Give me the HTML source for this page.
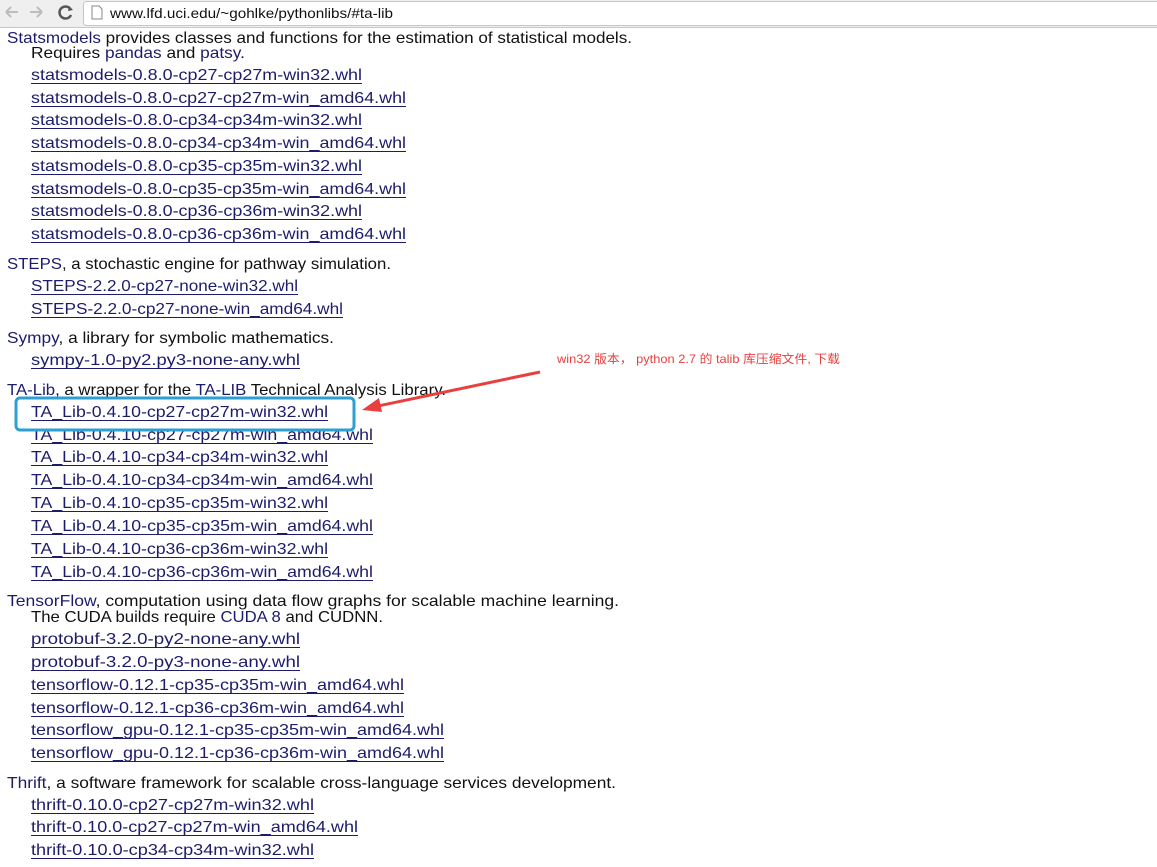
<!DOCTYPE html>
<html><head><meta charset="utf-8"><style>
html,body{margin:0;padding:0;background:#fff;width:1157px;height:867px;overflow:hidden}
svg{display:block}
text{font-family:"Liberation Sans",sans-serif;font-size:16px;fill:#111}
.l{fill:#1c1c6b}
.n{fill:#1c1c6b}
</style></head><body>
<svg width="1157" height="867" xmlns="http://www.w3.org/2000/svg">
<rect x="0" y="0" width="1157" height="28" fill="#efefef"/>
<line x1="0" y1="27.5" x2="1157" y2="27.5" stroke="#c8c8c8"/>
<rect x="83.5" y="1.5" width="1080" height="24" rx="3" fill="#fff" stroke="#c6c6c6"/>
<path d="M6 12h12M6 12l5-5M6 12l5 5" stroke="#bdbdbd" stroke-width="2" fill="none"/>
<path d="M42 12H30M42 12l-5-5M42 12l-5 5" stroke="#bdbdbd" stroke-width="2" fill="none"/>
<path d="M71 10a6 6 0 1 0 0 5" stroke="#555" stroke-width="2.5" fill="none"/>
<path d="M69 6l4 4-5 1z" fill="#555"/>
<path d="M92 6h7l3 3v10h-10z" fill="#fff" stroke="#888"/>
<text x="110" y="18" style="font-size:14px" textLength="283" lengthAdjust="spacingAndGlyphs" fill="#222">www.lfd.uci.edu/~gohlke/pythonlibs/#ta-lib</text>

<g id="body">
<text x="7" y="43" textLength="625" lengthAdjust="spacingAndGlyphs"><tspan class="n">Statsmodels</tspan> provides classes and functions for the estimation of statistical models.</text>
<text x="31" y="58" textLength="214" lengthAdjust="spacingAndGlyphs">Requires <tspan class="n">pandas</tspan> and <tspan class="n">patsy</tspan>.</text>
<text x="7" y="269" textLength="384" lengthAdjust="spacingAndGlyphs"><tspan class="n">STEPS</tspan>, a stochastic engine for pathway simulation.</text>
<text x="7" y="343" textLength="327" lengthAdjust="spacingAndGlyphs"><tspan class="n">Sympy</tspan>, a library for symbolic mathematics.</text>
<text x="7" y="395" textLength="439" lengthAdjust="spacingAndGlyphs"><tspan class="n">TA-Lib</tspan>, a wrapper for the <tspan class="n">TA-LIB</tspan> Technical Analysis Library.</text>
<text x="7" y="606" textLength="612" lengthAdjust="spacingAndGlyphs"><tspan class="n">TensorFlow</tspan>, computation using data flow graphs for scalable machine learning.</text>
<text x="31" y="622" textLength="352" lengthAdjust="spacingAndGlyphs">The CUDA builds require <tspan class="n">CUDA 8</tspan> and CUDNN.</text>
<text x="7" y="788" textLength="609" lengthAdjust="spacingAndGlyphs"><tspan class="n">Thrift</tspan>, a software framework for scalable cross-language services development.</text>
</g>
<g id="links"></g>

<rect x="16" y="398" width="338" height="32" rx="4" fill="none" stroke="#2c9fd4" stroke-width="3"/>
<line x1="540" y1="372" x2="378" y2="406" stroke="#e8403f" stroke-width="3"/>
<path d="M362 410l17-12 3 14z" fill="#e8403f"/>
<text x="557" y="363" textLength="283" lengthAdjust="spacingAndGlyphs" style="font-family:'Liberation Sans','Noto Sans CJK SC',sans-serif;font-size:12px;fill:#e8403f">win32 版本，  python 2.7 的  talib 库压缩文件, 下载</text>
</svg>
<script>
var L=[
["statsmodels-0.8.0-cp27-cp27m-win32.whl",75,362],
["statsmodels-0.8.0-cp27-cp27m-win_amd64.whl",98,406],
["statsmodels-0.8.0-cp34-cp34m-win32.whl",120,362],
["statsmodels-0.8.0-cp34-cp34m-win_amd64.whl",143,406],
["statsmodels-0.8.0-cp35-cp35m-win32.whl",166,362],
["statsmodels-0.8.0-cp35-cp35m-win_amd64.whl",189,406],
["statsmodels-0.8.0-cp36-cp36m-win32.whl",211,362],
["statsmodels-0.8.0-cp36-cp36m-win_amd64.whl",234,406],
["STEPS-2.2.0-cp27-none-win32.whl",286,298],
["STEPS-2.2.0-cp27-none-win_amd64.whl",309,343],
["sympy-1.0-py2.py3-none-any.whl",360,300],
["TA_Lib-0.4.10-cp27-cp27m-win32.whl",412,328],
["TA_Lib-0.4.10-cp27-cp27m-win_amd64.whl",435,373],
["TA_Lib-0.4.10-cp34-cp34m-win32.whl",457,328],
["TA_Lib-0.4.10-cp34-cp34m-win_amd64.whl",480,373],
["TA_Lib-0.4.10-cp35-cp35m-win32.whl",503,328],
["TA_Lib-0.4.10-cp35-cp35m-win_amd64.whl",526,373],
["TA_Lib-0.4.10-cp36-cp36m-win32.whl",549,328],
["TA_Lib-0.4.10-cp36-cp36m-win_amd64.whl",572,373],
["protobuf-3.2.0-py2-none-any.whl",639,300],
["protobuf-3.2.0-py3-none-any.whl",662,300],
["tensorflow-0.12.1-cp35-cp35m-win_amd64.whl",685,404],
["tensorflow-0.12.1-cp36-cp36m-win_amd64.whl",708,404],
["tensorflow_gpu-0.12.1-cp35-cp35m-win_amd64.whl",730,444],
["tensorflow_gpu-0.12.1-cp36-cp36m-win_amd64.whl",753,444],
["thrift-0.10.0-cp27-cp27m-win32.whl",805,314],
["thrift-0.10.0-cp27-cp27m-win_amd64.whl",827,358],
["thrift-0.10.0-cp34-cp34m-win32.whl",850,314]];
var g=document.getElementById('links'),ns="http://www.w3.org/2000/svg";
L.forEach(function(a){var t=document.createElementNS(ns,'text');t.setAttribute('x',31);t.setAttribute('y',a[1]+5);t.setAttribute('textLength',a[2]-31);t.setAttribute('lengthAdjust','spacingAndGlyphs');t.setAttribute('class','l');t.textContent=a[0];g.appendChild(t);
var u=document.createElementNS(ns,'line');u.setAttribute('x1',31);u.setAttribute('x2',a[2]);u.setAttribute('y1',a[1]+8.5);u.setAttribute('y2',a[1]+8.5);u.setAttribute('stroke','#1c1c6b');u.setAttribute('stroke-width','1');g.appendChild(u);});
</script>
</body></html>
